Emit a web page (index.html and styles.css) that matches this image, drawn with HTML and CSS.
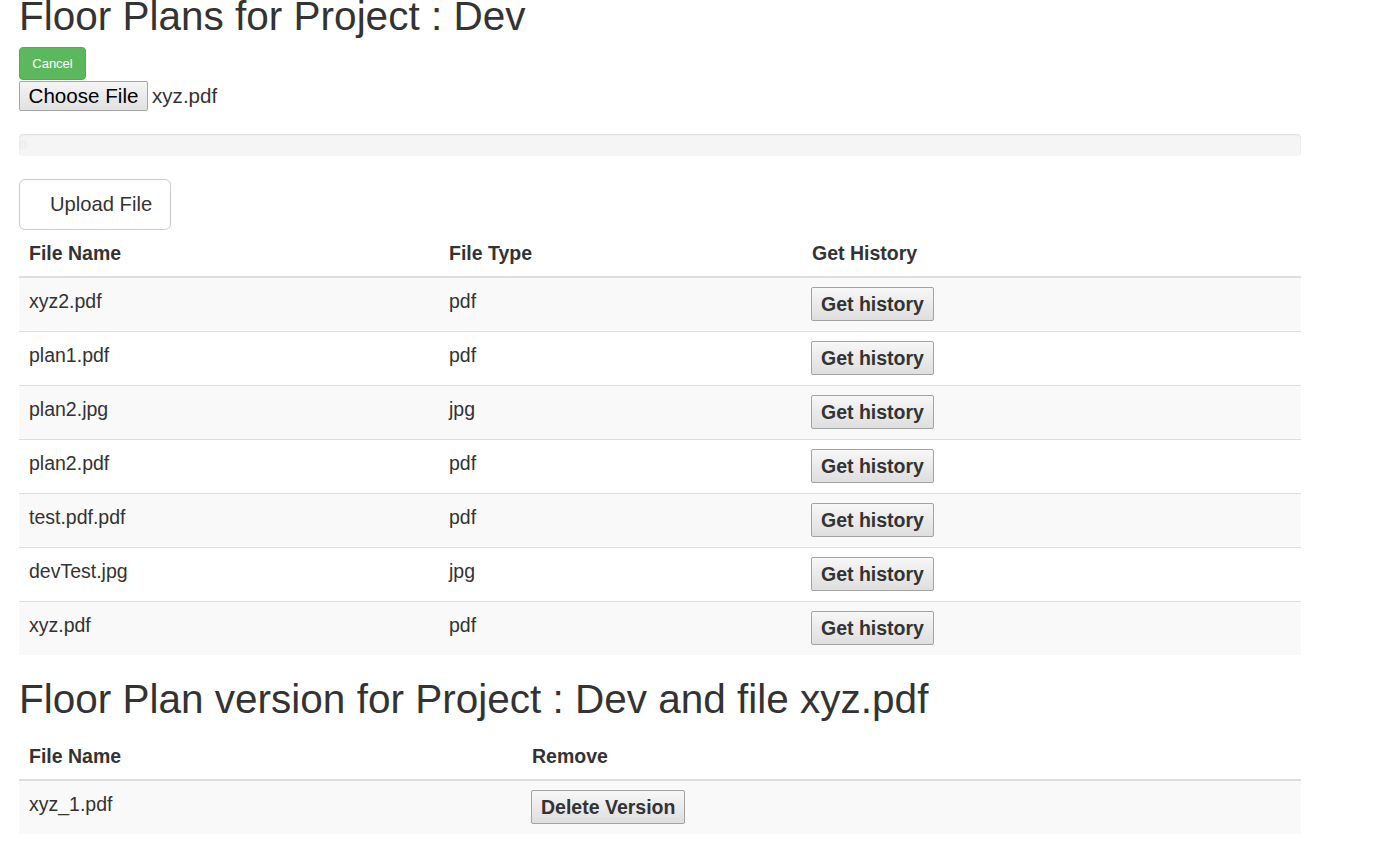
FILE: index.html
```html
<!DOCTYPE html>
<html>
<head>
<meta charset="utf-8">
<title>Floor Plans</title>
<link rel="stylesheet" href="styles.css">
</head>
<body>
<div class="container">
  <h1 class="title title-top">Floor Plans for Project : Dev</h1>
  <div class="cancel-row"><button class="btn-cancel">Cancel</button></div>
  <div class="file-row">
    <span class="file-btn">Choose File</span>
    <span class="file-name">xyz.pdf</span>
  </div>
  <div class="progress"><div class="progress-bar">0</div></div>
  <button class="btn-upload">Upload File</button>

  <table class="table table-files">
    <colgroup><col class="c1"><col class="c2"><col class="c3"></colgroup>
    <thead>
      <tr><th>File Name</th><th>File Type</th><th>Get History</th></tr>
    </thead>
    <tbody>
      <tr><td>xyz2.pdf</td><td>pdf</td><td><button class="btn-native">Get history</button></td></tr>
      <tr><td>plan1.pdf</td><td>pdf</td><td><button class="btn-native">Get history</button></td></tr>
      <tr><td>plan2.jpg</td><td>jpg</td><td><button class="btn-native">Get history</button></td></tr>
      <tr><td>plan2.pdf</td><td>pdf</td><td><button class="btn-native">Get history</button></td></tr>
      <tr><td>test.pdf.pdf</td><td>pdf</td><td><button class="btn-native">Get history</button></td></tr>
      <tr><td>devTest.jpg</td><td>jpg</td><td><button class="btn-native">Get history</button></td></tr>
      <tr><td>xyz.pdf</td><td>pdf</td><td><button class="btn-native">Get history</button></td></tr>
    </tbody>
  </table>

  <h1 class="title title-second">Floor Plan version for Project : Dev and file xyz.pdf</h1>

  <table class="table table-versions">
    <colgroup><col class="v1"><col class="v2"></colgroup>
    <thead>
      <tr><th>File Name</th><th>Remove</th></tr>
    </thead>
    <tbody>
      <tr><td>xyz_1.pdf</td><td><button class="btn-native">Delete Version</button></td></tr>
    </tbody>
  </table>
</div>
</body>
</html>
```

FILE: styles.css
```css
* { box-sizing: border-box; }
html, body {
  margin: 0;
  padding: 0;
  background: #fff;
}
body {
  font-family: "Liberation Sans", Arial, sans-serif;
  color: #333;
  font-size: 19.5px;
  line-height: 28px;
}
.container {
  padding-left: 19px;
  width: 1301px;
}
.title {
  font-family: "Liberation Sans", Arial, sans-serif;
  font-weight: 400;
  font-size: 40.5px;
  line-height: 44px;
  color: #333;
  margin: 0;
  white-space: nowrap;
}
.title-top {
  margin-top: -6px;
  margin-bottom: 9px;
}
.title-second {
  margin-top: 22px;
  margin-bottom: 12px;
}
.cancel-row {
  height: 33px;
  margin-bottom: 1px;
}
.btn-cancel {
  display: block;
  width: 67px;
  height: 33px;
  padding: 0;
  border: 1px solid #4cae4c;
  border-radius: 4px;
  background: #5cb85c;
  color: #fff;
  font-family: "Liberation Sans", Arial, sans-serif;
  font-size: 13px;
  line-height: 31px;
  text-align: center;
}
.file-row {
  display: flex;
  align-items: center;
  height: 30px;
  gap: 4px;
}
.file-btn {
  display: block;
  height: 30px;
  width: 129px;
  border: 1px solid #a6a6a6;
  border-radius: 2px;
  background: linear-gradient(#f4f4f4, #e1e1e1);
  color: #000;
  font-size: 20.6px;
  line-height: 28px;
  text-align: center;
}
.file-name {
  font-size: 20.6px;
  line-height: 28px;
  color: #333;
}
.progress {
  margin-top: 23px;
  height: 22px;
  width: 1282px;
  background: #f5f5f5;
  border-radius: 4px;
  box-shadow: inset 0 1px 2px rgba(0,0,0,0.1);
  overflow: visible;
}
.progress-bar {
  width: 0;
  height: 22px;
  color: #fff;
  font-size: 12px;
  line-height: 22px;
  padding-left: 1px;
  text-shadow: 0 0 1px rgba(0,0,0,0.25);
}
.btn-upload {
  display: block;
  margin-top: 23px;
  width: 152px;
  height: 51px;
  padding: 0 0 0 30px;
  text-align: left;
  border: 1px solid #ccc;
  border-radius: 6px;
  background: #fff;
  color: #333;
  font-family: "Liberation Sans", Arial, sans-serif;
  font-size: 20.2px;
  line-height: 49px;
}
.table {
  border-collapse: collapse;
  table-layout: fixed;
  border-spacing: 0;
  width: 1282px;
}
.table-files .c1 { width: 420px; }
.table-files .c2 { width: 363px; }
.table-files .c3 { width: 499px; }
.table-versions .v1 { width: 503px; }
.table-versions .v2 { width: 779px; }
.table th {
  text-align: left;
  font-weight: 700;
  padding: 9px 10px 9px 10px;
  line-height: 28px;
  vertical-align: bottom;
  border-bottom: 2px solid #ddd;
}
.table td {
  padding: 9px 10px 10px 10px;
  line-height: 28px;
  vertical-align: top;
  border-top: 1px solid #ddd;
}
.table tbody tr:first-child td {
  border-top: 0;
}
.table tbody tr:nth-child(odd) td {
  background: #f9f9f9;
}
.btn-native {
  display: block;
  height: 34px;
  margin-left: -1px;
  padding: 0 9px;
  border: 1px solid #a3a3a3;
  border-radius: 2px;
  background: linear-gradient(#f7f7f7, #dedede);
  color: #333;
  font-family: "Liberation Sans", Arial, sans-serif;
  font-weight: 700;
  font-size: 19.5px;
  line-height: 32px;
  white-space: nowrap;
}
```
